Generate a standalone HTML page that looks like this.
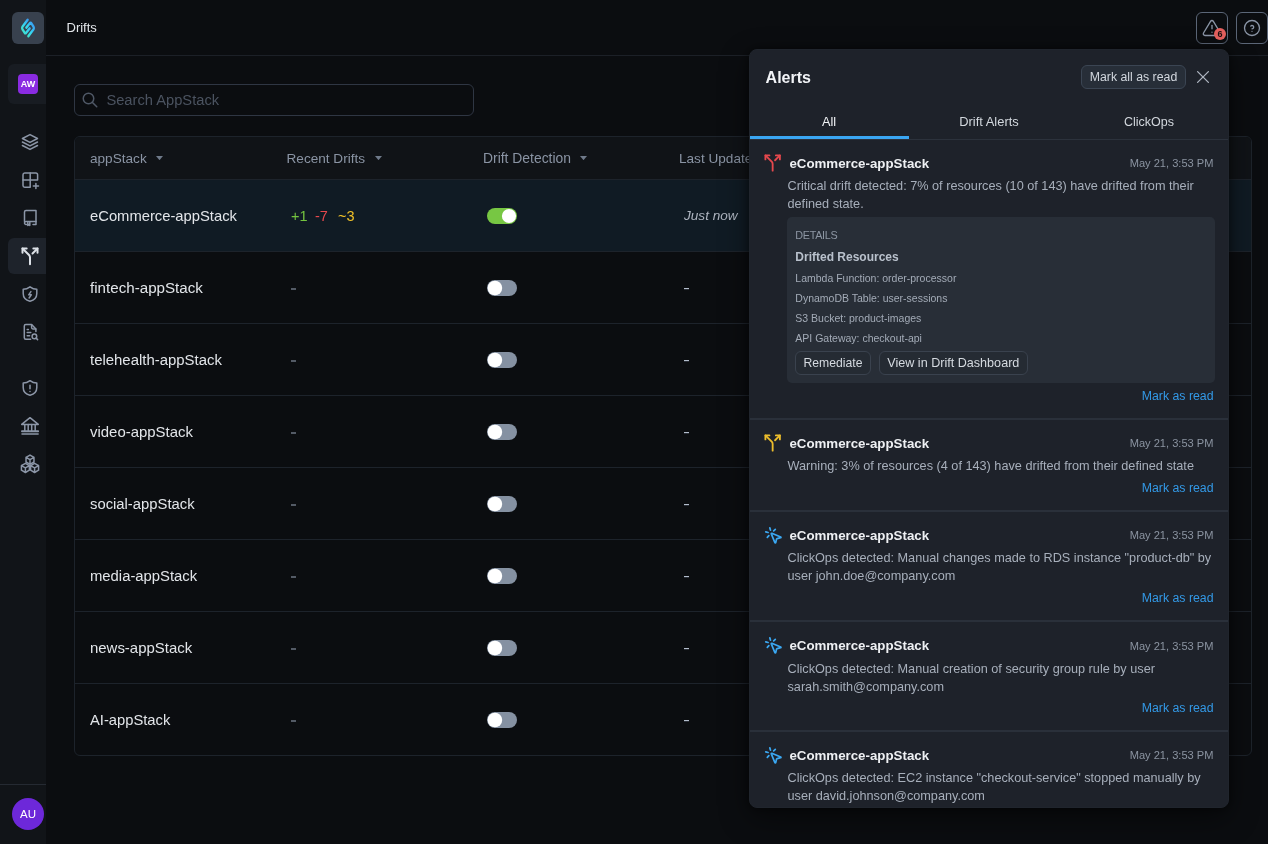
<!DOCTYPE html>
<html><head><meta charset="utf-8"><style>
html,body{margin:0;padding:0;}
body{width:1268px;height:844px;overflow:hidden;background:#0b0d10;position:relative;font-family:"Liberation Sans", sans-serif;}
.a{position:absolute;}
.t{position:absolute;white-space:pre;}
#pn,#mn{position:absolute;left:0;top:0;width:1268px;height:844px;overflow:hidden;will-change:transform;}
</style></head><body>
<div id="mn">
<div class="a" style="left:0px;top:0px;width:46px;height:844px;background:#111418;"></div>
<div class="a" style="left:12px;top:12px;width:32px;height:32px;background:#38414e;border-radius:6px;"></div>
<svg class="a" style="left:16px;top:16px;" width="24" height="24" viewBox="-12 -12 24 24" fill="none" stroke-linecap="round" stroke-linejoin="round"><defs><linearGradient id="lg" x1="0" y1="1" x2="1" y2="0"><stop offset="0" stop-color="#44e6c0"/><stop offset="0.45" stop-color="#35d6f2"/><stop offset="1" stop-color="#3b92f2"/></linearGradient></defs>
<g stroke="url(#lg)" stroke-width="2.5" fill="none" stroke-linecap="round" stroke-linejoin="round" transform="scale(0.93 1.02)">
<path d="M-1.8 -0.4 L2.2 -4.9 Q2.9 -5.6 3.5 -4.8 L6 -1.2 Q6.7 0 6 1.2 L0.4 8"/>
<path d="M1.8 0.4 L-2.2 4.9 Q-2.9 5.6 -3.5 4.8 L-6 1.2 Q-6.7 0 -6 -1.2 L-0.4 -8"/>
</g></svg>
<div class="a" style="left:8px;top:64px;width:38px;height:40px;background:#181c22;border-radius:6px 0 0 6px;"></div>
<div class="a" style="left:18px;top:74px;width:20px;height:20px;background:#8a2be2;border-radius:4px;"></div>
<div class="t" style="top:74.48px;font-size:9px;line-height:20px;color:#ffffff;font-weight:700;left:-272px;width:600px;text-align:center;">AW</div>
<div class="a" style="left:8px;top:238px;width:38px;height:36px;background:#1e232b;border-radius:6px 0 0 6px;"></div>
<svg class="a" style="left:20px;top:245.9px;" width="20" height="20" viewBox="0 0 24 24" fill="none" stroke-linecap="round" stroke-linejoin="round"><g stroke="#dde2e8" stroke-width="2.4"><path d="M16 3h5v5"/><path d="M8 3H3v5"/><path d="M12 22v-8.3a4 4 0 0 0-1.172-2.872L3 3"/><path d="m15 9 6-6"/></g></svg>
<svg class="a" style="left:0;top:0" width="46" height="844" viewBox="0 0 46 844"><g stroke="#8c96a7" stroke-width="1.5" fill="none" stroke-linecap="round" stroke-linejoin="round">
<path d="M30 134.6 L37.5 138.5 L30 142.4 L22.4 138.5 Z"/>
<path d="M22.4 142 L30 145.9 L37.5 142"/>
<path d="M22.4 145.5 L30 149.4 L37.5 145.5"/>
<path d="M24.7 172.9 H35.8 A1.8 1.8 0 0 1 37.6 174.7 V180 H23 V174.7 A1.8 1.8 0 0 1 24.7 172.9 Z"/>
<path d="M23 180 V185.5 A1.8 1.8 0 0 0 24.7 187.3 H30.2 V172.9"/>
<path d="M33.3 186 H38.5 M35.9 183.4 V188.6"/>
<path d="M24.5 221.5 V212 A1.5 1.5 0 0 1 26 210.5 H36 V224.4 H33"/>
<path d="M36 221.6 H26 A1.4 1.4 0 0 0 24.5 223 A1.4 1.4 0 0 0 26 224.4 H26.5"/>
<path d="M27.8 222.5 V225.4 L28.8 224.6 L29.8 225.4 V222.5"/>
<path d="M30 286.8 C32 288.3 34.5 289.2 36.8 289.2 L36.8 293.5 C36.8 297.5 33.8 300.3 30 301.3 C26.2 300.3 23.2 297.5 23.2 293.5 L23.2 289.2 C25.5 289.2 28 288.3 30 286.8 Z"/>
<path d="M30.9 291.6 L28.7 294.8 H31.3 L29.1 298"/>
<path d="M30.6 339.3 H25.8 A1.5 1.5 0 0 1 24.3 337.8 V326 A1.5 1.5 0 0 1 25.8 324.5 H31.6 L35.9 329.1 V331.4"/>
<path d="M31.6 324.7 V327.6 A1.3 1.3 0 0 0 32.9 328.9 H35.8"/>
<path d="M27.2 329.5 H28.4 M27.2 332.6 H30.8 M27.2 335.8 H29.6"/>
<circle cx="34.4" cy="336.4" r="2.3"/>
<path d="M36.1 338.1 L37.6 339.6"/>
<path d="M30 380.70000000000005 C32 382.20000000000005 34.5 383.1 36.8 383.1 L36.8 387.4 C36.8 391.4 33.8 394.20000000000005 30 395.20000000000005 C26.2 394.20000000000005 23.2 391.4 23.2 387.4 L23.2 383.1 C25.5 383.1 28 382.20000000000005 30 380.70000000000005 Z"/>
<path d="M30 385.2 V388.8 M30 391.4 V391.6"/>
<path d="M30 417.7 L38.3 424.4 H21.7 Z"/>
<path d="M24.8 424.6 V430.6 M28.2 424.6 V430.6 M31.7 424.6 V430.6 M35.2 424.6 V430.6"/>
<path d="M22 431.2 H38.1" stroke-width="2"/>
<path d="M22 433.9 H38.1"/>
<path d="M30.00 455.10 L33.98 457.40 L33.98 462.00 L30.00 464.30 L26.02 462.00 L26.02 457.40Z M26.02 457.40 L30.00 459.70 L33.98 457.40 M30.00 459.70 V464.30"/>
<path d="M25.40 463.30 L29.38 465.60 L29.38 470.20 L25.40 472.50 L21.42 470.20 L21.42 465.60Z M21.42 465.60 L25.40 467.90 L29.38 465.60 M25.40 467.90 V472.50"/>
<path d="M34.60 463.30 L38.58 465.60 L38.58 470.20 L34.60 472.50 L30.62 470.20 L30.62 465.60Z M30.62 465.60 L34.60 467.90 L38.58 465.60 M34.60 467.90 V472.50"/>
</g></svg>
<div class="a" style="left:0px;top:784px;width:46px;height:1px;background:#252a32;"></div>
<div class="a" style="left:12px;top:798px;width:32px;height:32px;background:#6d28d9;border-radius:50%;"></div>
<div class="t" style="top:804.21px;font-size:11.5px;line-height:20px;color:#ffffff;left:-272px;width:600px;text-align:center;">AU</div>
<div class="a" style="left:46px;top:55px;width:1222px;height:1px;background:#1c2027;"></div>
<div class="t" style="top:18.09px;font-size:13px;line-height:20px;color:#e4e7eb;left:66.5px;">Drifts</div>
<div class="a" style="left:1196px;top:12px;width:32px;height:32px;box-sizing:border-box;border:1px solid #5b6677;border-radius:6px;"></div>
<svg class="a" style="left:1202px;top:18px;" width="20" height="20" viewBox="0 0 24 24" fill="none" stroke-linecap="round" stroke-linejoin="round"><g stroke="#8a95a6" stroke-width="1.6"><path d="M10.24 3.957l-8.422 14.06a1.989 1.989 0 0 0 1.7 2.983h16.845a1.989 1.989 0 0 0 1.7-2.983l-8.423-14.06a1.989 1.989 0 0 0-3.4 0z"/><path d="M12 9v4"/><path d="M12 17h.01"/></g></svg>
<div class="a" style="left:1214px;top:28px;width:12px;height:12px;background:#e5605e;border-radius:50%;"></div>
<div class="t" style="top:24.48px;font-size:9px;line-height:20px;color:#1b1010;font-weight:700;left:920px;width:600px;text-align:center;">6</div>
<div class="a" style="left:1236px;top:12px;width:32px;height:32px;box-sizing:border-box;border:1px solid #5b6677;border-radius:6px;"></div>
<svg class="a" style="left:1242px;top:18px;" width="20" height="20" viewBox="0 0 24 24" fill="none" stroke-linecap="round" stroke-linejoin="round"><g stroke="#8a95a6" stroke-width="1.6"><circle cx="12" cy="12" r="9"/><path d="M12 16v.01"/><path d="M12 13a2 2 0 0 0 .914-3.782a1.98 1.98 0 0 0-2.414.483"/></g></svg>
<div class="a" style="left:74px;top:84px;width:400px;height:32px;box-sizing:border-box;border:1px solid #2f3643;border-radius:6px;"></div>
<svg class="a" style="left:81px;top:91px;" width="18" height="18" viewBox="0 0 24 24" fill="none" stroke-linecap="round" stroke-linejoin="round"><g stroke="#4f5866" stroke-width="2"><circle cx="10" cy="10" r="7"/><path d="M21 21l-6-6"/></g></svg>
<div class="t" style="top:90.30px;font-size:14.7px;line-height:20px;color:#4b5360;left:106.4px;">Search AppStack</div>
<div class="a" style="left:74px;top:136px;width:1178px;height:620px;box-sizing:border-box;border:1px solid #1d232b;border-radius:6px;background:#0b0d10;overflow:hidden;"></div>
<div class="a" style="left:75px;top:137px;width:1176px;height:43px;background:#101317;border-radius:5px 5px 0 0;"></div>
<div class="a" style="left:75px;top:179px;width:1176px;height:1px;background:#1d232b;"></div>
<div class="t" style="top:148.88px;font-size:13.6px;line-height:20px;color:#8a94a4;left:90px;">appStack</div>
<svg class="a" style="left:156.2px;top:156px;" width="7" height="4.2" viewBox="0 0 7 4.2" fill="none" stroke-linecap="round" stroke-linejoin="round"><path d="M0 0h7l-3.5 4.2z" fill="#6f7a8a"/></svg>
<div class="t" style="top:148.88px;font-size:13.6px;line-height:20px;color:#8a94a4;left:286.5px;">Recent Drifts</div>
<svg class="a" style="left:375px;top:156px;" width="7" height="4.2" viewBox="0 0 7 4.2" fill="none" stroke-linecap="round" stroke-linejoin="round"><path d="M0 0h7l-3.5 4.2z" fill="#6f7a8a"/></svg>
<div class="t" style="top:148.18px;font-size:13.9px;line-height:20px;color:#8a94a4;left:483px;">Drift Detection</div>
<svg class="a" style="left:580.2px;top:156px;" width="7" height="4.2" viewBox="0 0 7 4.2" fill="none" stroke-linecap="round" stroke-linejoin="round"><path d="M0 0h7l-3.5 4.2z" fill="#6f7a8a"/></svg>
<div class="t" style="top:148.88px;font-size:13.6px;line-height:20px;color:#8a94a4;left:679px;">Last Updated</div>
<svg class="a" style="left:770px;top:156px;" width="7" height="4.2" viewBox="0 0 7 4.2" fill="none" stroke-linecap="round" stroke-linejoin="round"><path d="M0 0h7l-3.5 4.2z" fill="#6f7a8a"/></svg>
<div class="a" style="left:75px;top:180px;width:1176px;height:71px;background:#101b24;"></div>
<div class="t" style="top:205.88px;font-size:14.78px;line-height:20px;color:#e2e5e9;left:90px;">eCommerce-appStack</div>
<div class="t" style="top:205.97px;font-size:14.5px;line-height:20px;color:#74c43f;left:291px;">+1</div>
<div class="t" style="top:205.97px;font-size:14.5px;line-height:20px;color:#e5484d;left:315px;">-7</div>
<div class="t" style="top:205.97px;font-size:14.5px;line-height:20px;color:#efc028;left:338px;">~3</div>
<div class="a" style="left:487px;top:208px;width:30px;height:16px;background:#77c743;border-radius:8px;"></div>
<svg class="a" style="left:487px;top:208px" width="30" height="16" viewBox="0 0 30 16"><circle cx="22" cy="8" r="7.1" fill="#fff"/></svg>
<div class="t" style="top:206.28px;font-size:13.6px;line-height:20px;color:#aeb5c0;font-style:italic;left:684px;">Just now</div>
<div class="a" style="left:75px;top:251px;width:1176px;height:1px;background:#1d232b;"></div>
<div class="t" style="top:277.74px;font-size:15.17px;line-height:20px;color:#e2e5e9;left:90px;">fintech-appStack</div>
<div class="a" style="left:291px;top:288px;width:5px;height:2px;background:#535a65;"></div>
<div class="a" style="left:487px;top:280px;width:30px;height:16px;background:#8591a2;border-radius:8px;"></div>
<svg class="a" style="left:487px;top:280px" width="30" height="16" viewBox="0 0 30 16"><circle cx="7.9" cy="8" r="7.3" fill="#fff"/></svg>
<div class="a" style="left:684px;top:288px;width:5px;height:1px;background:#b4bdcc;"></div>
<div class="a" style="left:684px;top:289px;width:5px;height:1px;background:#2a2f38;"></div>
<div class="a" style="left:75px;top:323px;width:1176px;height:1px;background:#1d232b;"></div>
<div class="t" style="top:349.82px;font-size:14.93px;line-height:20px;color:#e2e5e9;left:90px;">telehealth-appStack</div>
<div class="a" style="left:291px;top:360px;width:5px;height:2px;background:#535a65;"></div>
<div class="a" style="left:487px;top:352px;width:30px;height:16px;background:#8591a2;border-radius:8px;"></div>
<svg class="a" style="left:487px;top:352px" width="30" height="16" viewBox="0 0 30 16"><circle cx="7.9" cy="8" r="7.3" fill="#fff"/></svg>
<div class="a" style="left:684px;top:360px;width:5px;height:1px;background:#b4bdcc;"></div>
<div class="a" style="left:684px;top:361px;width:5px;height:1px;background:#2a2f38;"></div>
<div class="a" style="left:75px;top:395px;width:1176px;height:1px;background:#1d232b;"></div>
<div class="t" style="top:421.82px;font-size:14.94px;line-height:20px;color:#e2e5e9;left:90px;">video-appStack</div>
<div class="a" style="left:291px;top:432px;width:5px;height:2px;background:#535a65;"></div>
<div class="a" style="left:487px;top:424px;width:30px;height:16px;background:#8591a2;border-radius:8px;"></div>
<svg class="a" style="left:487px;top:424px" width="30" height="16" viewBox="0 0 30 16"><circle cx="7.9" cy="8" r="7.3" fill="#fff"/></svg>
<div class="a" style="left:684px;top:432px;width:5px;height:1px;background:#b4bdcc;"></div>
<div class="a" style="left:684px;top:433px;width:5px;height:1px;background:#2a2f38;"></div>
<div class="a" style="left:75px;top:467px;width:1176px;height:1px;background:#1d232b;"></div>
<div class="t" style="top:493.86px;font-size:14.82px;line-height:20px;color:#e2e5e9;left:90px;">social-appStack</div>
<div class="a" style="left:291px;top:504px;width:5px;height:2px;background:#535a65;"></div>
<div class="a" style="left:487px;top:496px;width:30px;height:16px;background:#8591a2;border-radius:8px;"></div>
<svg class="a" style="left:487px;top:496px" width="30" height="16" viewBox="0 0 30 16"><circle cx="7.9" cy="8" r="7.3" fill="#fff"/></svg>
<div class="a" style="left:684px;top:504px;width:5px;height:1px;background:#b4bdcc;"></div>
<div class="a" style="left:684px;top:505px;width:5px;height:1px;background:#2a2f38;"></div>
<div class="a" style="left:75px;top:539px;width:1176px;height:1px;background:#1d232b;"></div>
<div class="t" style="top:565.85px;font-size:14.84px;line-height:20px;color:#e2e5e9;left:90px;">media-appStack</div>
<div class="a" style="left:291px;top:576px;width:5px;height:2px;background:#535a65;"></div>
<div class="a" style="left:487px;top:568px;width:30px;height:16px;background:#8591a2;border-radius:8px;"></div>
<svg class="a" style="left:487px;top:568px" width="30" height="16" viewBox="0 0 30 16"><circle cx="7.9" cy="8" r="7.3" fill="#fff"/></svg>
<div class="a" style="left:684px;top:576px;width:5px;height:1px;background:#b4bdcc;"></div>
<div class="a" style="left:684px;top:577px;width:5px;height:1px;background:#2a2f38;"></div>
<div class="a" style="left:75px;top:611px;width:1176px;height:1px;background:#1d232b;"></div>
<div class="t" style="top:637.82px;font-size:14.95px;line-height:20px;color:#e2e5e9;left:90px;">news-appStack</div>
<div class="a" style="left:291px;top:648px;width:5px;height:2px;background:#535a65;"></div>
<div class="a" style="left:487px;top:640px;width:30px;height:16px;background:#8591a2;border-radius:8px;"></div>
<svg class="a" style="left:487px;top:640px" width="30" height="16" viewBox="0 0 30 16"><circle cx="7.9" cy="8" r="7.3" fill="#fff"/></svg>
<div class="a" style="left:684px;top:648px;width:5px;height:1px;background:#b4bdcc;"></div>
<div class="a" style="left:684px;top:649px;width:5px;height:1px;background:#2a2f38;"></div>
<div class="a" style="left:75px;top:683px;width:1176px;height:1px;background:#1d232b;"></div>
<div class="t" style="top:709.89px;font-size:14.74px;line-height:20px;color:#e2e5e9;left:90px;">AI-appStack</div>
<div class="a" style="left:291px;top:720px;width:5px;height:2px;background:#535a65;"></div>
<div class="a" style="left:487px;top:712px;width:30px;height:16px;background:#8591a2;border-radius:8px;"></div>
<svg class="a" style="left:487px;top:712px" width="30" height="16" viewBox="0 0 30 16"><circle cx="7.9" cy="8" r="7.3" fill="#fff"/></svg>
<div class="a" style="left:684px;top:720px;width:5px;height:1px;background:#b4bdcc;"></div>
<div class="a" style="left:684px;top:721px;width:5px;height:1px;background:#2a2f38;"></div>
</div>
<div id="pn">
<div class="a" style="left:749px;top:49px;width:480px;height:759px;box-sizing:border-box;background:#1e222a;border:1px solid #20252d;border-radius:8px;box-shadow:0 0 10px rgba(0,0,0,0.5), 0 10px 30px rgba(0,0,0,0.45);"></div>
<div class="t" style="top:68.25px;font-size:16px;line-height:20px;color:#f2f4f7;font-weight:700;left:765.6px;">Alerts</div>
<div class="a" style="left:1081px;top:65px;width:105px;height:24px;box-sizing:border-box;background:#272e38;border:1px solid #3b4553;border-radius:6px;"></div>
<div class="t" style="top:66.94px;font-size:12.3px;line-height:20px;color:#d2d7de;left:833.5px;width:600px;text-align:center;">Mark all as read</div>
<svg class="a" style="left:1195px;top:69px;" width="16" height="16" viewBox="0 0 16 16" fill="none" stroke-linecap="round" stroke-linejoin="round"><g stroke="#aeb5c0" stroke-width="1.3"><path d="M2.6 2.6l10.8 10.8M13.4 2.6l-10.8 10.8"/></g></svg>
<div class="t" style="top:111.60px;font-size:12.7px;line-height:20px;color:#f2f4f7;left:529px;width:600px;text-align:center;">All</div>
<div class="t" style="top:111.53px;font-size:12.9px;line-height:20px;color:#d3d8de;left:689px;width:600px;text-align:center;">Drift Alerts</div>
<div class="t" style="top:111.67px;font-size:12.5px;line-height:20px;color:#d3d8de;left:849px;width:600px;text-align:center;">ClickOps</div>
<div class="a" style="left:750px;top:139px;width:478px;height:1px;background:#2c323c;"></div>
<div class="a" style="left:750px;top:136px;width:159px;height:3px;background:#3aa6f2;"></div>
<svg class="a" style="left:763.1px;top:153.0px;" width="19.3" height="19.3" viewBox="0 0 24 24" fill="none" stroke-linecap="round" stroke-linejoin="round"><g stroke="#e5484d" stroke-width="2.3"><path d="M16 3h5v5"/><path d="M8 3H3v5"/><path d="M12 22v-8.3a4 4 0 0 0-1.172-2.872L3 3"/><path d="m15 9 6-6"/></g></svg>
<div class="t" style="top:153.79px;font-size:13.3px;line-height:20px;color:#eef0f3;font-weight:700;left:789.4px;">eCommerce-appStack</div>
<div class="t" style="top:153.05px;font-size:11.1px;line-height:20px;color:#8b94a1;right:54.5px;">May 21, 3:53 PM</div>
<div class="t" style="top:176.10px;font-size:12.7px;line-height:20px;color:#a7afbb;left:787.5px;">Critical drift detected: 7% of resources (10 of 143) have drifted from their</div>
<div class="t" style="top:194.10px;font-size:12.7px;line-height:20px;color:#a7afbb;left:787.5px;">defined state.</div>
<div class="t" style="top:385.94px;font-size:12.3px;line-height:20px;color:#3399e6;right:54.5px;">Mark as read</div>
<div class="a" style="left:750px;top:418px;width:478px;height:2px;background:#2a303a;"></div>
<div class="a" style="left:787px;top:217px;width:428px;height:166px;background:#282e37;border-radius:5px;"></div>
<div class="t" style="top:224.86px;font-size:10.8px;line-height:20px;color:#8d96a3;letter-spacing:-0.3px;left:795.3px;">DETAILS</div>
<div class="t" style="top:246.84px;font-size:12px;line-height:20px;color:#b9c1cc;font-weight:700;left:795.3px;">Drifted Resources</div>
<div class="t" style="top:268.06px;font-size:10.5px;line-height:20px;color:#a3abb7;left:795.3px;">Lambda Function: order-processor</div>
<div class="t" style="top:288.06px;font-size:10.5px;line-height:20px;color:#a3abb7;left:795.3px;">DynamoDB Table: user-sessions</div>
<div class="t" style="top:308.06px;font-size:10.5px;line-height:20px;color:#a3abb7;left:795.3px;">S3 Bucket: product-images</div>
<div class="t" style="top:328.06px;font-size:10.5px;line-height:20px;color:#a3abb7;left:795.3px;">API Gateway: checkout-api</div>
<div class="a" style="left:795px;top:351px;width:76px;height:24px;box-sizing:border-box;background:#252b33;border:1px solid #3a424e;border-radius:6px;"></div>
<div class="t" style="top:353.27px;font-size:12.2px;line-height:20px;color:#d5dae0;left:533px;width:600px;text-align:center;">Remediate</div>
<div class="a" style="left:879px;top:351px;width:149px;height:24px;box-sizing:border-box;background:#252b33;border:1px solid #3a424e;border-radius:6px;"></div>
<div class="t" style="top:352.63px;font-size:12.6px;line-height:20px;color:#d5dae0;left:653.3px;width:600px;text-align:center;">View in Drift Dashboard</div>
<svg class="a" style="left:763.1px;top:433.1px;" width="19.3" height="19.3" viewBox="0 0 24 24" fill="none" stroke-linecap="round" stroke-linejoin="round"><g stroke="#ecbd2c" stroke-width="2.3"><path d="M16 3h5v5"/><path d="M8 3H3v5"/><path d="M12 22v-8.3a4 4 0 0 0-1.172-2.872L3 3"/><path d="m15 9 6-6"/></g></svg>
<div class="t" style="top:433.89px;font-size:13.3px;line-height:20px;color:#eef0f3;font-weight:700;left:789.4px;">eCommerce-appStack</div>
<div class="t" style="top:433.15px;font-size:11.1px;line-height:20px;color:#8b94a1;right:54.5px;">May 21, 3:53 PM</div>
<div class="t" style="top:456.20px;font-size:12.7px;line-height:20px;color:#a7afbb;left:787.5px;">Warning: 3% of resources (4 of 143) have drifted from their defined state</div>
<div class="t" style="top:478.44px;font-size:12.3px;line-height:20px;color:#3399e6;right:54.5px;">Mark as read</div>
<div class="a" style="left:750px;top:510.3px;width:478px;height:2px;background:#2a303a;"></div>
<svg class="a" style="left:763.7px;top:525.6999999999999px;" width="19.4" height="19.4" viewBox="0 0 24 24" fill="none" stroke-linecap="round" stroke-linejoin="round"><g stroke="#3ba8f2" stroke-width="2.15"><path d="M14 4.1 12 6"/><path d="m5.1 8-2.9-.8"/><path d="m6 12-1.9 2"/><path d="M7.2 2.2 8 5.1"/><path d="M9.037 9.69a.498.498 0 0 1 .653-.653l11 4.5a.5.5 0 0 1-.074.949l-4.349 1.041a1 1 0 0 0-.74.739l-1.04 4.35a.5.5 0 0 1-.95.074z"/></g></svg>
<div class="t" style="top:525.89px;font-size:13.3px;line-height:20px;color:#eef0f3;font-weight:700;left:789.4px;">eCommerce-appStack</div>
<div class="t" style="top:525.15px;font-size:11.1px;line-height:20px;color:#8b94a1;right:54.5px;">May 21, 3:53 PM</div>
<div class="t" style="top:548.20px;font-size:12.7px;line-height:20px;color:#a7afbb;left:787.5px;">ClickOps detected: Manual changes made to RDS instance "product-db" by</div>
<div class="t" style="top:566.20px;font-size:12.7px;line-height:20px;color:#a7afbb;left:787.5px;">user john.doe@company.com</div>
<div class="t" style="top:587.94px;font-size:12.3px;line-height:20px;color:#3399e6;right:54.5px;">Mark as read</div>
<div class="a" style="left:750px;top:620.2px;width:478px;height:2px;background:#2a303a;"></div>
<svg class="a" style="left:763.7px;top:636.1px;" width="19.4" height="19.4" viewBox="0 0 24 24" fill="none" stroke-linecap="round" stroke-linejoin="round"><g stroke="#3ba8f2" stroke-width="2.15"><path d="M14 4.1 12 6"/><path d="m5.1 8-2.9-.8"/><path d="m6 12-1.9 2"/><path d="M7.2 2.2 8 5.1"/><path d="M9.037 9.69a.498.498 0 0 1 .653-.653l11 4.5a.5.5 0 0 1-.074.949l-4.349 1.041a1 1 0 0 0-.74.739l-1.04 4.35a.5.5 0 0 1-.95.074z"/></g></svg>
<div class="t" style="top:636.29px;font-size:13.3px;line-height:20px;color:#eef0f3;font-weight:700;left:789.4px;">eCommerce-appStack</div>
<div class="t" style="top:635.55px;font-size:11.1px;line-height:20px;color:#8b94a1;right:54.5px;">May 21, 3:53 PM</div>
<div class="t" style="top:658.60px;font-size:12.7px;line-height:20px;color:#a7afbb;left:787.5px;">ClickOps detected: Manual creation of security group rule by user</div>
<div class="t" style="top:676.60px;font-size:12.7px;line-height:20px;color:#a7afbb;left:787.5px;">sarah.smith@company.com</div>
<div class="t" style="top:698.44px;font-size:12.3px;line-height:20px;color:#3399e6;right:54.5px;">Mark as read</div>
<div class="a" style="left:750px;top:729.5px;width:478px;height:2px;background:#2a303a;"></div>
<svg class="a" style="left:763.7px;top:745.6px;" width="19.4" height="19.4" viewBox="0 0 24 24" fill="none" stroke-linecap="round" stroke-linejoin="round"><g stroke="#3ba8f2" stroke-width="2.15"><path d="M14 4.1 12 6"/><path d="m5.1 8-2.9-.8"/><path d="m6 12-1.9 2"/><path d="M7.2 2.2 8 5.1"/><path d="M9.037 9.69a.498.498 0 0 1 .653-.653l11 4.5a.5.5 0 0 1-.074.949l-4.349 1.041a1 1 0 0 0-.74.739l-1.04 4.35a.5.5 0 0 1-.95.074z"/></g></svg>
<div class="t" style="top:745.79px;font-size:13.3px;line-height:20px;color:#eef0f3;font-weight:700;left:789.4px;">eCommerce-appStack</div>
<div class="t" style="top:745.05px;font-size:11.1px;line-height:20px;color:#8b94a1;right:54.5px;">May 21, 3:53 PM</div>
<div class="t" style="top:768.10px;font-size:12.7px;line-height:20px;color:#a7afbb;left:787.5px;">ClickOps detected: EC2 instance "checkout-service" stopped manually by</div>
<div class="t" style="top:786.10px;font-size:12.7px;line-height:20px;color:#a7afbb;left:787.5px;">user david.johnson@company.com</div>
</div>
</body></html>
